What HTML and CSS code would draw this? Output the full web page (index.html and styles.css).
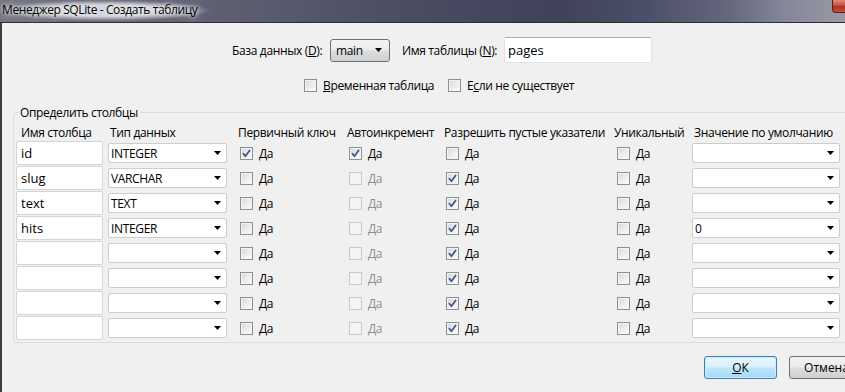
FILE: index.html
```html
<!DOCTYPE html>
<html lang="ru">
<head>
<meta charset="utf-8">
<title>Менеджер SQLite - Создать таблицу</title>
<link rel="stylesheet" href="styles.css">
</head>
<body>
<div class="window">
  <div class="titlebar">
    <span class="title">Менеджер SQLite - Создать таблицу</span>
    <span class="close"></span>
  </div>
  <div class="dialog">
    <div class="top-row">
      <span class="lbl lbl-db">База данных (<u>D</u>):</span>
      <div class="combo"><span>main</span><svg class="arrow" width="7" height="4" viewBox="0 0 7 4"><path d="M0 0H7L3.5 4Z"/></svg></div>
      <span class="lbl lbl-name">Имя таблицы (<u>N</u>):</span>
      <div class="textbox">pages</div>
    </div>
    <div class="opts-row">
      <div class="check opt-temp"><span class="cb"></span><span><u>В</u>ременная таблица</span></div>
      <div class="check"><span class="cb"></span><span>Е<u>с</u>ли не существует</span></div>
    </div>
    <fieldset class="group">
      <legend>Определить столбцы</legend>
      <div class="grid">
        <div class="hd hd-name">Имя столбца</div>
        <div class="hd hd-pad">Тип данных</div>
        <div class="hd">Первичный ключ</div>
        <div class="hd">Автоинкремент</div>
        <div class="hd">Разрешить пустые указатели</div>
        <div class="hd">Уникальный</div>
        <div class="hd hd-pad">Значение по умолчанию</div>

        <div class="field">id</div>
        <div class="sel sel-type"><span>INTEGER</span><svg class="arrow" width="7" height="4" viewBox="0 0 7 4"><path d="M0 0H7L3.5 4Z"/></svg></div>
        <div class="check cell"><span class="cb on"><svg width="11" height="11" viewBox="0 0 11 11"><path d="M2.3 5.6L4.4 8.3L8.6 2.4"/></svg></span><span>Да</span></div>
        <div class="check cell"><span class="cb on"><svg width="11" height="11" viewBox="0 0 11 11"><path d="M2.3 5.6L4.4 8.3L8.6 2.4"/></svg></span><span>Да</span></div>
        <div class="check cell"><span class="cb"></span><span>Да</span></div>
        <div class="check cell cell-u"><span class="cb"></span><span>Да</span></div>
        <div class="sel sel-def"><span></span><svg class="arrow" width="7" height="4" viewBox="0 0 7 4"><path d="M0 0H7L3.5 4Z"/></svg></div>

        <div class="field">slug</div>
        <div class="sel sel-type"><span>VARCHAR</span><svg class="arrow" width="7" height="4" viewBox="0 0 7 4"><path d="M0 0H7L3.5 4Z"/></svg></div>
        <div class="check cell"><span class="cb"></span><span>Да</span></div>
        <div class="check cell off"><span class="cb"></span><span>Да</span></div>
        <div class="check cell"><span class="cb on"><svg width="11" height="11" viewBox="0 0 11 11"><path d="M2.3 5.6L4.4 8.3L8.6 2.4"/></svg></span><span>Да</span></div>
        <div class="check cell cell-u"><span class="cb"></span><span>Да</span></div>
        <div class="sel sel-def"><span></span><svg class="arrow" width="7" height="4" viewBox="0 0 7 4"><path d="M0 0H7L3.5 4Z"/></svg></div>

        <div class="field">text</div>
        <div class="sel sel-type"><span>TEXT</span><svg class="arrow" width="7" height="4" viewBox="0 0 7 4"><path d="M0 0H7L3.5 4Z"/></svg></div>
        <div class="check cell"><span class="cb"></span><span>Да</span></div>
        <div class="check cell off"><span class="cb"></span><span>Да</span></div>
        <div class="check cell"><span class="cb on"><svg width="11" height="11" viewBox="0 0 11 11"><path d="M2.3 5.6L4.4 8.3L8.6 2.4"/></svg></span><span>Да</span></div>
        <div class="check cell cell-u"><span class="cb"></span><span>Да</span></div>
        <div class="sel sel-def"><span></span><svg class="arrow" width="7" height="4" viewBox="0 0 7 4"><path d="M0 0H7L3.5 4Z"/></svg></div>

        <div class="field">hits</div>
        <div class="sel sel-type"><span>INTEGER</span><svg class="arrow" width="7" height="4" viewBox="0 0 7 4"><path d="M0 0H7L3.5 4Z"/></svg></div>
        <div class="check cell"><span class="cb"></span><span>Да</span></div>
        <div class="check cell off"><span class="cb"></span><span>Да</span></div>
        <div class="check cell"><span class="cb on"><svg width="11" height="11" viewBox="0 0 11 11"><path d="M2.3 5.6L4.4 8.3L8.6 2.4"/></svg></span><span>Да</span></div>
        <div class="check cell cell-u"><span class="cb"></span><span>Да</span></div>
        <div class="sel sel-def"><span>0</span><svg class="arrow" width="7" height="4" viewBox="0 0 7 4"><path d="M0 0H7L3.5 4Z"/></svg></div>

        <div class="field"></div>
        <div class="sel sel-type"><span></span><svg class="arrow" width="7" height="4" viewBox="0 0 7 4"><path d="M0 0H7L3.5 4Z"/></svg></div>
        <div class="check cell"><span class="cb"></span><span>Да</span></div>
        <div class="check cell off"><span class="cb"></span><span>Да</span></div>
        <div class="check cell"><span class="cb on"><svg width="11" height="11" viewBox="0 0 11 11"><path d="M2.3 5.6L4.4 8.3L8.6 2.4"/></svg></span><span>Да</span></div>
        <div class="check cell cell-u"><span class="cb"></span><span>Да</span></div>
        <div class="sel sel-def"><span></span><svg class="arrow" width="7" height="4" viewBox="0 0 7 4"><path d="M0 0H7L3.5 4Z"/></svg></div>

        <div class="field"></div>
        <div class="sel sel-type"><span></span><svg class="arrow" width="7" height="4" viewBox="0 0 7 4"><path d="M0 0H7L3.5 4Z"/></svg></div>
        <div class="check cell"><span class="cb"></span><span>Да</span></div>
        <div class="check cell off"><span class="cb"></span><span>Да</span></div>
        <div class="check cell"><span class="cb on"><svg width="11" height="11" viewBox="0 0 11 11"><path d="M2.3 5.6L4.4 8.3L8.6 2.4"/></svg></span><span>Да</span></div>
        <div class="check cell cell-u"><span class="cb"></span><span>Да</span></div>
        <div class="sel sel-def"><span></span><svg class="arrow" width="7" height="4" viewBox="0 0 7 4"><path d="M0 0H7L3.5 4Z"/></svg></div>

        <div class="field"></div>
        <div class="sel sel-type"><span></span><svg class="arrow" width="7" height="4" viewBox="0 0 7 4"><path d="M0 0H7L3.5 4Z"/></svg></div>
        <div class="check cell"><span class="cb"></span><span>Да</span></div>
        <div class="check cell off"><span class="cb"></span><span>Да</span></div>
        <div class="check cell"><span class="cb on"><svg width="11" height="11" viewBox="0 0 11 11"><path d="M2.3 5.6L4.4 8.3L8.6 2.4"/></svg></span><span>Да</span></div>
        <div class="check cell cell-u"><span class="cb"></span><span>Да</span></div>
        <div class="sel sel-def"><span></span><svg class="arrow" width="7" height="4" viewBox="0 0 7 4"><path d="M0 0H7L3.5 4Z"/></svg></div>

        <div class="field"></div>
        <div class="sel sel-type"><span></span><svg class="arrow" width="7" height="4" viewBox="0 0 7 4"><path d="M0 0H7L3.5 4Z"/></svg></div>
        <div class="check cell"><span class="cb"></span><span>Да</span></div>
        <div class="check cell off"><span class="cb"></span><span>Да</span></div>
        <div class="check cell"><span class="cb on"><svg width="11" height="11" viewBox="0 0 11 11"><path d="M2.3 5.6L4.4 8.3L8.6 2.4"/></svg></span><span>Да</span></div>
        <div class="check cell cell-u"><span class="cb"></span><span>Да</span></div>
        <div class="sel sel-def"><span></span><svg class="arrow" width="7" height="4" viewBox="0 0 7 4"><path d="M0 0H7L3.5 4Z"/></svg></div>
      </div>
    </fieldset>
    <div class="buttons">
      <button class="btn btn-default" type="button"><u>О</u>К</button>
      <button class="btn" type="button">Отмена</button>
    </div>
  </div>
</div>
</body>
</html>
```

FILE: styles.css
```css
* { box-sizing: border-box; }
html, body { margin: 0; padding: 0; }
body {
  width: 845px;
  height: 392px;
  overflow: hidden;
  background: #f0f0f0;
  color: #000;
  font-family: "Segoe UI", "Open Sans", "Noto Sans", sans-serif;
  font-size: 12px;
  letter-spacing: -0.35px;
}
u { text-decoration: underline; text-underline-offset: 1px; }

.window {
  width: 845px;
  height: 392px;
  display: flex;
  flex-direction: column;
  overflow: hidden;
}

/* title bar */
.titlebar {
  flex: none;
  height: 23px;
  display: flex;
  justify-content: space-between;
  align-items: flex-start;
  border-bottom: 1px solid #2c2e3a;
  background: linear-gradient(90deg, #72747f 0%, #5c5e70 28%, #4a4c62 48%, #3f4259 66%, #4b4e68 76%, #64667c 86%, #85879a 93%, #999aa4 100%);
}
.title {
  padding: 2px 14px 3px 2px;
  line-height: 16px;
  font-size: 12px;
  color: #000;
  letter-spacing: -0.4px;
  background: radial-gradient(ellipse closest-side at 50% 50%, rgba(215,216,222,0.95) 55%, rgba(215,216,222,0) 100%);
  text-shadow: 0 0 4px #fff, 0 0 8px rgba(255,255,255,0.9);
}
.close {
  width: 13px;
  height: 14px;
  margin-top: -1px;
  border: 1px solid #5d1d17;
  border-right: none;
  border-radius: 0 0 0 4px;
  background: linear-gradient(180deg, #e08a7a 0%, #c9503e 45%, #a8301f 55%, #c6523a 100%);
}

/* dialog body */
.dialog {
  flex: 1;
  border-left: 2px solid #3a3c48;
  padding-top: 14px;
  overflow: hidden;
}

.top-row {
  display: flex;
  align-items: center;
  height: 26px;
  padding-left: 230px;
}
.lbl { white-space: nowrap; }
.lbl-db { width: 98px; flex: none; }
.lbl-name { width: 102px; flex: none; margin-left: 12px; }
.combo {
  width: 60px;
  height: 23px;
  flex: none;
  display: flex;
  align-items: center;
  justify-content: space-between;
  padding: 0 7px 0 5px;
  border: 1px solid #707070;
  border-radius: 3px;
  background: linear-gradient(180deg, #f3f3f3 0%, #ebebeb 48%, #dddddd 52%, #cfcfcf 100%);
}
.textbox {
  width: 148px;
  height: 26px;
  flex: none;
  display: flex;
  align-items: center;
  padding-left: 3px;
  font-size: 13px;
  letter-spacing: 0;
  background: #fff;
  border: 1px solid #e2e3ea;
  border-top-color: #abadb3;
  border-radius: 2px;
}
.arrow { flex: none; display: block; fill: #000; }

.opts-row {
  display: flex;
  align-items: center;
  height: 19px;
  margin-top: 13px;
  padding-left: 302px;
}
.opt-temp { width: 144px; flex: none; }

.check {
  display: flex;
  align-items: center;
  gap: 6px;
  white-space: nowrap;
}
.cb {
  width: 13px;
  height: 13px;
  flex: none;
  display: flex;
  align-items: center;
  justify-content: center;
  border: 1px solid #8e8f8f;
  background: linear-gradient(135deg, #d3d5d8 0%, #e9eaeb 45%, #fbfbfb 100%);
  box-shadow: inset 0 0 0 1px #f5f5f5;
}
.cb svg { display: block; }
.cb svg path { fill: none; stroke: #3f5486; stroke-width: 1.7; stroke-linecap: round; stroke-linejoin: round; }
.check.off { color: #8d8d8d; }
.check.off .cb {
  border-color: #c9c9c9;
  background: #f4f4f4;
  box-shadow: none;
}

/* group box */
.group {
  margin: 10px 0 0 11px;
  width: 900px;
  min-width: 0;
  padding: 0 2px 2px 2px;
  border: 1px solid #d5dfe5;
  border-radius: 3px;
}
.group legend {
  margin-left: 2px;
  padding: 0 2px;
  line-height: 15px;
}

.grid {
  padding-top: 5px;
  display: grid;
  grid-template-columns: 92px 130px 109px 97px 170px 78px 148px;
  grid-template-rows: 15px repeat(8, 24px);
  row-gap: 1px;
  align-items: center;
}
.hd {
  white-space: nowrap;
  line-height: 15px;
  align-self: start;
}
.hd-name { padding-left: 5px; }
.hd-pad { padding-left: 2px; }

.field {
  width: 87px;
  height: 24px;
  display: flex;
  align-items: center;
  padding-left: 4px;
  font-size: 13px;
  letter-spacing: 0;
  background: #fff;
  border: 1px solid #d4d4d4;
  border-radius: 2px;
}
.sel {
  height: 20px;
  display: flex;
  align-items: center;
  justify-content: space-between;
  padding: 0 5px 0 2px;
  background: #fff;
  border: 1px solid #cdcdcd;
  border-radius: 2px;
}
.sel-type { width: 119px; }
.sel-def { width: 148px; }
.cell { padding-left: 2px; }
.cell-u { padding-left: 3px; }

/* buttons */
.buttons {
  display: flex;
  gap: 12px;
  margin-top: 13px;
  padding-left: 702px;
}
.btn {
  flex: none;
  width: 75px;
  height: 23px;
  padding: 0;
  font-family: inherit;
  font-size: 12px;
  letter-spacing: 0;
  color: #000;
  border: 1px solid #707070;
  border-radius: 3px;
  background: linear-gradient(180deg, #f2f2f2 0%, #ebebeb 48%, #dddddd 52%, #cfcfcf 100%);
}
.btn-default {
  width: 73px;
  border-color: #3c7fb1;
  background: linear-gradient(180deg, #eaf6fd 0%, #d9f0fc 48%, #bee6fd 52%, #a7d9f5 100%);
  box-shadow: inset 0 0 0 1px #c8ecfc;
}
```
